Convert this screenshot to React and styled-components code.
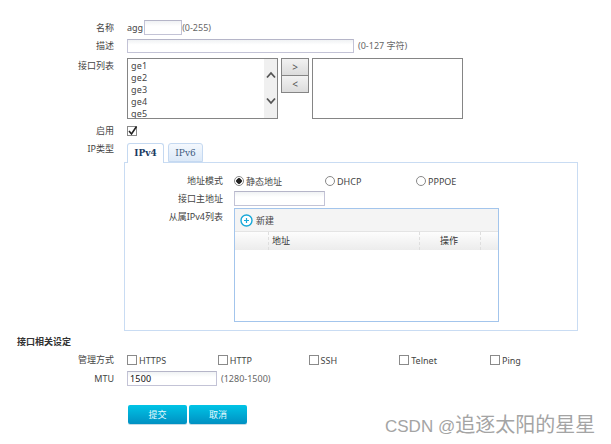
import React from "react";
import styled, { createGlobalStyle } from "styled-components";

const GlobalStyle = createGlobalStyle`
    html, body { margin: 0; padding: 0; background: #fff; }
    body {
        font-family: "Noto Sans", "Noto Sans CJK SC", sans-serif;
        font-size: 9px;
        color: #444;
    }
`;

const Page = styled.div`
    position: relative;
    box-sizing: border-box;
    width: 611px;
    height: 444px;
    padding-top: 20px;
    overflow: hidden;
`;

const Row = styled.div`
    display: grid;
    grid-template-columns: ${(p) => p.$label || 114}px 1fr;
    column-gap: ${(p) => p.$gap || 13}px;
    align-items: ${(p) => p.$align || "center"};
    min-height: ${(p) => p.$h}px;
    margin-top: ${(p) => p.$mt || 0}px;
    margin-bottom: ${(p) => p.$mb || 0}px;
`;

const Label = styled.div`
    text-align: right;
    line-height: 12px;
    white-space: nowrap;
    padding-top: ${(p) => p.$pt || 0}px;
`;

const Inline = styled.div`
    display: flex;
    align-items: center;
    gap: ${(p) => p.$gap || 0}px;
`;

const Hint = styled.span`
    color: #666;
    margin-left: ${(p) => p.$ml || 0}px;
    white-space: nowrap;
`;

const TextInput = styled.div`
    box-sizing: border-box;
    width: ${(p) => p.$w}px;
    height: ${(p) => p.$h || 15}px;
    margin-left: ${(p) => p.$ml || 0}px;
    border: 1px solid #c3c3d6;
    border-top-color: #b5b5c8;
    background: linear-gradient(#f0f2f4, #fff 40%);
    padding-left: 2px;
    line-height: 13px;
    letter-spacing: 0.2px;
    color: #111;
`;

const ListBox = styled.div`
    box-sizing: border-box;
    display: flex;
    width: ${(p) => p.$w}px;
    height: 61px;
    border: 1px solid #858585;
    background: #fff;
    overflow: hidden;
`;

const ListItems = styled.div`
    flex: 1;
    padding: 1px 0 0 3px;
    line-height: 12px;
    letter-spacing: 0.2px;
    color: #444;
`;

const ScrollTrack = styled.div`
    display: flex;
    flex-direction: column;
    align-items: center;
    gap: 18px;
    width: 13px;
    padding-top: 12px;
    background: #f0f0f0;
`;

const Chevron = styled.svg`
    display: block;
    width: 10px;
    height: 8px;
    fill: none;
    stroke: #555;
    stroke-width: 1.8;
`;

const MoveButtons = styled.div`
    display: flex;
    flex-direction: column;
    margin: 0 3px;
    align-self: flex-start;
`;

const MoveButton = styled.div`
    box-sizing: border-box;
    width: 28px;
    height: ${(p) => p.$h}px;
    margin-top: ${(p) => p.$mt || 0}px;
    border: 1px solid #858585;
    background: linear-gradient(#f2f2f2, #dcdcdc);
    text-align: center;
    font-size: 10px;
    line-height: 16px;
    color: #555;
`;

const Check = styled.span`
    box-sizing: border-box;
    display: block;
    flex: none;
    width: ${(p) => p.$size || 10}px;
    height: ${(p) => p.$size || 10}px;
    border: 1px solid #8a8a8a;
    background: #fff;
    position: relative;
`;

const CheckMark = styled.svg`
    position: absolute;
    left: -1px;
    top: -2px;
    width: 11px;
    height: 11px;
    fill: none;
    stroke: #222;
    stroke-width: 1.6;
`;

const Tabs = styled.div`
    display: flex;
    gap: 4px;
    height: 20px;
    position: relative;
    z-index: 1;
`;

const Tab = styled.div`
    box-sizing: border-box;
    height: ${(p) => (p.$active ? 20 : 19)}px;
    width: ${(p) => p.$w}px;
    border: 1px solid #c5d9f1;
    border-bottom: ${(p) => (p.$active ? "none" : "1px solid #c5d9f1")};
    border-radius: 3px 3px 0 0;
    background: ${(p) => (p.$active ? "#fff" : "linear-gradient(#f4f8fd, #dce9f8)")};
    color: ${(p) => (p.$active ? "#1b3a63" : "#3d5a80")};
    font-family: "DejaVu Serif", serif;
    font-weight: ${(p) => (p.$active ? 700 : 400)};
    line-height: 18px;
    text-align: center;
`;

const Panel = styled.div`
    box-sizing: border-box;
    width: 454px;
    height: 169px;
    margin-left: 124px;
    margin-top: -1px;
    border: 1px solid #c9dcf3;
    padding-top: 11px;
`;

const PanelRow = styled(Row).attrs({ $label: 98, $gap: 11 })``;

const RadioGroup = styled.div`
    display: grid;
    grid-template-columns: repeat(3, 91px);
`;

const Option = styled.label`
    display: flex;
    align-items: center;
    gap: 2px;
    white-space: nowrap;
`;

const Radio = styled.span`
    box-sizing: border-box;
    display: block;
    width: 10px;
    height: 10px;
    border: 1px solid #888;
    border-radius: 50%;
    background: ${(p) => (p.$on ? "radial-gradient(circle, #222 0 2.5px, #fff 3px)" : "#fff")};
`;

const TableBox = styled.div`
    box-sizing: border-box;
    width: 265px;
    height: 114px;
    border: 1px solid #a3c5ec;
`;

const Toolbar = styled.div`
    display: flex;
    align-items: center;
    gap: 3px;
    height: 22px;
    padding-left: 5px;
    background: #f4f4f4;
    border-bottom: 1px solid #e4e4e4;
`;

const PlusIcon = styled.svg`
    display: block;
    width: 13px;
    height: 13px;
`;

const TableHead = styled.div`
    display: grid;
    grid-template-columns: 34px 151px 61px 1fr;
    height: 18px;
    background: linear-gradient(#fdfdfd, #ececec);
`;

const HeadCell = styled.div`
    box-sizing: border-box;
    border-right: ${(p) => (p.$last ? "none" : "1px dashed #dedede")};
    padding-left: ${(p) => p.$pl || 0}px;
    line-height: 18px;
    color: #333;
`;

const SectionTitle = styled.div`
    margin: 5px 0 0 17px;
    height: 12px;
    line-height: 12px;
    font-weight: 700;
    color: #333;
`;

const CheckGrid = styled.div`
    display: grid;
    grid-template-columns: repeat(5, 90.75px);
`;

const Actions = styled.div`
    display: flex;
    gap: 2px;
    margin: 19px 0 0 128px;
`;

const SubmitButton = styled.div`
    box-sizing: border-box;
    width: ${(p) => p.$w}px;
    height: 19px;
    border-radius: 2px;
    background: linear-gradient(#00c4e6, #0090c2);
    box-shadow: 0 1px 0 #c5dbe5;
    color: #e8fbff;
    text-align: center;
    line-height: 19px;
`;

const Watermark = styled.div`
    position: absolute;
    left: 385px;
    top: 413px;
    font-family: "Liberation Sans", "Noto Sans CJK SC", sans-serif;
    font-size: 17px;
    line-height: 24px;
    color: #a4a4a4;
    white-space: nowrap;
`;

const WatermarkName = styled.span`
    font-size: 20px;
`;

const interfaces = ["ge1", "ge2", "ge3", "ge4", "ge5"];
const manageModes = ["HTTPS", "HTTP", "SSH", "Telnet", "Ping"];

const App = () => (
    <Page>
        <GlobalStyle />
        <Row $h={15} $mb={3}>
            <Label>名称</Label>
            <Inline>
                agg
                <TextInput $w={38} $ml={1} />
                <Hint>(0-255)</Hint>
            </Inline>
        </Row>
        <Row $h={15} $mb={5}>
            <Label>描述</Label>
            <Inline>
                <TextInput $w={227} $h={14} />
                <Hint $ml={4}>(0-127 字符)</Hint>
            </Inline>
        </Row>
        <Row $align="start" $h={61} $mb={5}>
            <Label $pt={2}>接口列表</Label>
            <Inline>
                <ListBox $w={151}>
                    <ListItems>
                        {interfaces.map((name) => (
                            <div key={name}>{name}</div>
                        ))}
                    </ListItems>
                    <ScrollTrack>
                        <Chevron viewBox="0 0 10 8">
                            <path d="M1 6.5 5 2l4 4.5" />
                        </Chevron>
                        <Chevron viewBox="0 0 10 8">
                            <path d="M1 1.5 5 6l4-4.5" />
                        </Chevron>
                    </ScrollTrack>
                </ListBox>
                <MoveButtons>
                    <MoveButton $h={18}>&gt;</MoveButton>
                    <MoveButton $h={18} $mt={-1}>&lt;</MoveButton>
                </MoveButtons>
                <ListBox $w={151} />
            </Inline>
        </Row>
        <Row $h={13}>
            <Label>启用</Label>
            <Check>
                <CheckMark viewBox="0 0 11 11">
                    <path d="M2 6l2.5 3L9.5 1.5" />
                </CheckMark>
            </Check>
        </Row>
        <Row $align="start" $h={20} $mt={6}>
            <Label>IP类型</Label>
            <Tabs>
                <Tab $active $w={37}>IPv4</Tab>
                <Tab $w={35}>IPv6</Tab>
            </Tabs>
        </Row>
        <Panel>
            <PanelRow $h={14} $mb={3}>
                <Label>地址模式</Label>
                <RadioGroup>
                    <Option><Radio $on />静态地址</Option>
                    <Option><Radio />DHCP</Option>
                    <Option><Radio />PPPOE</Option>
                </RadioGroup>
            </PanelRow>
            <PanelRow $h={15} $mb={2}>
                <Label>接口主地址</Label>
                <TextInput $w={91} />
            </PanelRow>
            <PanelRow $align="start" $h={114}>
                <Label $pt={3}>从属IPv4列表</Label>
                <TableBox>
                    <Toolbar>
                        <PlusIcon viewBox="0 0 13 13">
                            <circle cx="6.5" cy="6.5" r="5.5" fill="#fff" stroke="#18a8d8" strokeWidth="1.4" />
                            <path d="M6.5 4v5M4 6.5h5" stroke="#18a8d8" strokeWidth="1.2" />
                        </PlusIcon>
                        新建
                    </Toolbar>
                    <TableHead>
                        <HeadCell />
                        <HeadCell $pl={3}>地址</HeadCell>
                        <HeadCell $pl={20}>操作</HeadCell>
                        <HeadCell $last />
                    </TableHead>
                </TableBox>
            </PanelRow>
        </Panel>
        <SectionTitle>接口相关设定</SectionTitle>
        <Row $h={14} $mt={5} $mb={4}>
            <Label>管理方式</Label>
            <CheckGrid>
                {manageModes.map((mode) => (
                    <Option key={mode}>
                        <Check />
                        {mode}
                    </Option>
                ))}
            </CheckGrid>
        </Row>
        <Row $h={15}>
            <Label>MTU</Label>
            <Inline>
                <TextInput $w={90}>1500</TextInput>
                <Hint $ml={4}>(1280-1500)</Hint>
            </Inline>
        </Row>
        <Actions>
            <SubmitButton $w={59}>提交</SubmitButton>
            <SubmitButton $w={58}>取消</SubmitButton>
        </Actions>
        <Watermark>
            CSDN @<WatermarkName>追逐太阳的星星</WatermarkName>
        </Watermark>
    </Page>
);

export default App;
